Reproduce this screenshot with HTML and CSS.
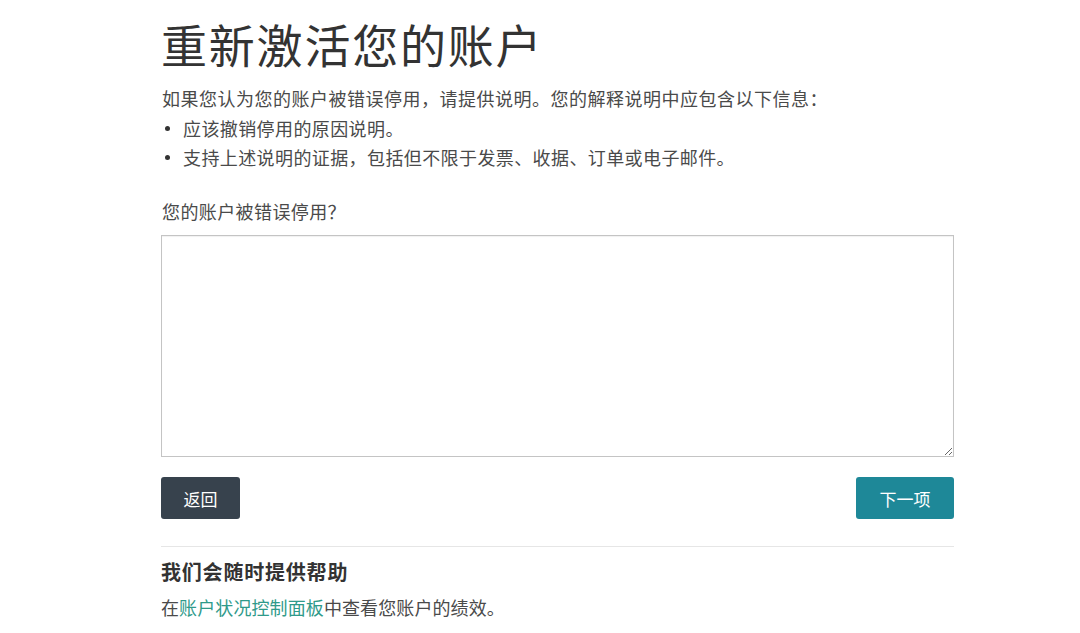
FILE: index.html
```html
<!DOCTYPE html>
<html lang="zh-CN">
<head>
<meta charset="utf-8">
<title>重新激活您的账户</title>
<link rel="stylesheet" href="styles.css">
</head>
<body>
<main class="page">
  <h1 class="title">重新激活您的账户</h1>
  <p class="intro">如果您认为您的账户被错误停用，请提供说明。您的解释说明中应包含以下信息：</p>
  <ul class="points">
    <li>应该撤销停用的原因说明。</li>
    <li>支持上述说明的证据，包括但不限于发票、收据、订单或电子邮件。</li>
  </ul>
  <label class="label" for="reason">您的账户被错误停用？</label>
  <textarea id="reason" class="field"></textarea>
  <div class="actions">
    <button class="btn btn-back" type="button">返回</button>
    <button class="btn btn-next" type="button">下一项</button>
  </div>
  <section class="help">
    <h2 class="help-title">我们会随时提供帮助</h2>
    <p class="help-text">在<a href="#" class="link">账户状况控制面板</a>中查看您账户的绩效。</p>
  </section>
</main>
</body>
</html>
```

FILE: styles.css
```css
* { box-sizing: border-box; }
html, body { margin: 0; padding: 0; background: #fff; }
body {
  font-family: "Noto Sans CJK SC", "Noto Sans", "Liberation Sans", sans-serif;
  color: #4a4a4a;
}
.page {
  width: 793px;
  margin-left: 161px;
  padding-top: 15px;
}
.title {
  margin: 0;
  font-size: 46px;
  line-height: 56px;
  font-weight: 400;
  letter-spacing: 1.8px;
  color: #333;
}
.intro {
  margin: 12px 0 0;
  font-size: 18px;
  line-height: 30px;
  letter-spacing: 0.5px;
  padding-left: 1px;
}
.points {
  list-style: none;
  margin: 1px 0 0;
  padding: 0 0 0 22px;
  font-size: 18px;
  line-height: 29px;
  letter-spacing: 0.4px;
}
.points li { position: relative; }
.points li::before {
  content: "";
  position: absolute;
  left: -18px;
  top: 12px;
  width: 5px;
  height: 5px;
  border-radius: 50%;
  background: #333;
}
.label {
  display: block;
  margin-top: 24px;
  font-size: 18px;
  line-height: 30px;
  letter-spacing: 0.4px;
  padding-left: 1px;
}
.field {
  display: block;
  width: 793px;
  height: 222px;
  margin-top: 9px;
  border: 1px solid #c4c4c4;
  border-radius: 0;
  box-shadow: inset 0 1px 1px rgba(0,0,0,0.06);
  font: inherit;
  resize: vertical;
}
.actions {
  display: flex;
  justify-content: space-between;
  margin-top: 20px;
  padding-bottom: 27px;
  border-bottom: 1px solid #e6e6e6;
}
.btn {
  height: 42px;
  border: none;
  border-radius: 3px;
  color: #fff;
  font-family: inherit;
  font-size: 17px;
  cursor: pointer;
}
.btn-back { width: 79px; background: #37424d; }
.btn-next { width: 98px; background: #1e8898; }
.help { padding-top: 10px; }
.help-title {
  margin: 0;
  font-size: 20px;
  line-height: 30px;
  font-weight: 700;
  letter-spacing: 0.8px;
  color: #333;
}
.help-text {
  margin: 5px 0 0;
  font-size: 18px;
  line-height: 30px;
  letter-spacing: 0.1px;
}
.link { color: #2f9a8a; text-decoration: none; }
```
